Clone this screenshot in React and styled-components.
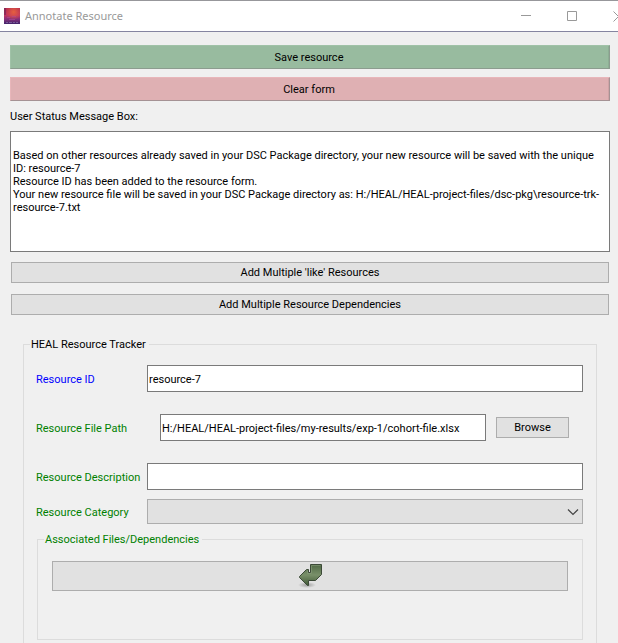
import React, { useState } from 'react';
import styled, { createGlobalStyle } from 'styled-components';

const GlobalStyle = createGlobalStyle`
  *, *::before, *::after { box-sizing: border-box; }
  body { margin: 0; background: #f0f0f0; }
  body, button, input, select, textarea {
    font-family: Roboto, Tahoma, sans-serif;
    font-size: 11px;
    line-height: 13px;
    color: #000;
  }
`;

const Window = styled.div`
  height: 100vh;
  overflow: hidden;
  background: #f0f0f0;
`;

const TitleBar = styled.header`
  display: flex;
  align-items: center;
  height: 32px;
  padding-left: 4px;
  overflow: hidden;
  background: #fff;
  border-top: 1px solid #97979b;
  border-bottom: 1px solid #8585a0;
`;

const Title = styled.h1`
  flex: 1;
  margin: 0 0 0 5px;
  font: 400 11px/16px "Noto Sans", "Segoe UI", sans-serif;
  color: #999;
`;

const WindowButton = styled.button`
  display: flex;
  flex: none;
  align-items: center;
  justify-content: center;
  width: 46px;
  height: 30px;
  padding: 0;
  background: none;
  border: 0;
`;

const ClippedCorner = styled.div`
  width: 23px;
  overflow: hidden;
`;

const Body = styled.main`
  display: flex;
  flex-direction: column;
  padding: 13px 8px 0 10px;
`;

const ActionButton = styled.button`
  height: 24px;
  margin-bottom: 8px;
  padding: 0 2px 0 0;
  background: ${p => p.$fill};
  border: 1px solid;
  border-color: ${p => p.$light} ${p => p.$dark} ${p => p.$dark} ${p => p.$light};
  box-shadow: inset -1px 0 ${p => p.$shade};
`;

const StatusLabel = styled.label`
  margin: 1px 0 8px;
`;

const StatusBox = styled.textarea`
  display: block;
  height: 121px;
  padding: 4px 2px;
  background: #fff;
  border: 1px solid #7a7a7a;
  border-radius: 0;
  outline: 0;
  resize: none;
  overflow: hidden;
`;

const PushButton = styled.button`
  display: flex;
  align-items: center;
  justify-content: center;
  height: ${p => (p.$tall ? '30px' : '21px')};
  padding: 0;
  background: #e1e1e1;
  border: 1px solid #adadad;
`;

const ButtonStack = styled.div`
  display: flex;
  flex-direction: column;
  gap: 11px;
  padding: 10px 1px 0;
`;

const Group = styled.fieldset`
  min-width: 0;
  margin: ${p => p.$margin};
  padding: ${p => p.$padding};
  border: 1px solid #dcdcdc;
`;

const Legend = styled.legend`
  margin-left: ${p => p.$indent};
  padding: 0 3px 0 1px;
  color: ${p => p.$color};
`;

const Fields = styled.div`
  display: grid;
  grid-template-columns: 103px minmax(0, 1fr);
  column-gap: 8px;
  align-items: center;
`;

const FieldLabel = styled.label`
  padding-top: 2px;
  color: ${p => p.$color || '#008000'};
  white-space: nowrap;
`;

const TextInput = styled.input`
  flex: 1;
  width: 100%;
  min-width: 0;
  height: 27px;
  padding: 2px 1px 0;
  background: #fff;
  border: 1px solid #7a7a7a;
  border-radius: 0;
  outline: 0;
`;

const PathRow = styled.div`
  display: flex;
  align-items: center;
  gap: 10px;
  padding: 22px 14px 22px 13px;
`;

const BrowseButton = styled(PushButton)`
  flex: none;
  width: 73px;
`;

const SelectWrap = styled.div`
  display: grid;
  margin-top: 9px;
  align-items: center;

  & > * { grid-area: 1 / 1; }
  & > svg { justify-self: end; margin-right: 4px; pointer-events: none; }
`;

const CategoryLabel = styled(FieldLabel)`
  margin-top: 9px;
`;

const Select = styled.select`
  width: 100%;
  height: 25px;
  padding: 0 20px 0 3px;
  appearance: none;
  background: #e1e1e1;
  border: 1px solid #adadad;
  border-radius: 0;
`;

const DependencyBody = styled.div`
  display: flex;
  flex-direction: column;
  min-height: 78px;
`;

const STATUS = `
Based on other resources already saved in your DSC Package directory, your new resource will be saved with the unique ID: resource-7
Resource ID has been added to the resource form.
Your new resource file will be saved in your DSC Package directory as: H:/HEAL/HEAL-project-files/dsc-pkg\\resource-trk-resource-7.txt`;

function AppIcon() {
  return (
    <svg width="16" height="16" viewBox="0 0 16 16" aria-hidden="true">
      <defs>
        <linearGradient id="sky" x1="0" y1="0" x2="0" y2="1">
          <stop offset="0" stopColor="#b52b4d" />
          <stop offset="0.45" stopColor="#c23560" />
          <stop offset="0.7" stopColor="#85307a" />
          <stop offset="1" stopColor="#40246a" />
        </linearGradient>
        <radialGradient id="glow" cx="0.6" cy="0.25" r="0.5">
          <stop offset="0" stopColor="#e5603f" />
          <stop offset="1" stopColor="#e5603f" stopOpacity="0" />
        </radialGradient>
      </defs>
      <rect width="16" height="16" fill="url(#sky)" />
      <rect width="16" height="16" fill="url(#glow)" />
      <path d="M0 0h2v7H0z" fill="#5d2457" opacity=".5" />
      <path d="M3 9h3v1H3zM8 8h4v1H8zM5 11h6v1H5z" fill="#b04a92" opacity=".6" />
      <path d="M2 14h2v1H2zM5 14h3v1H5zM9 14h2v1H9zM12 14h2v1h-2z" fill="#8f7bb0" opacity=".6" />
    </svg>
  );
}

function ReturnArrow() {
  return (
    <svg width="26" height="26" viewBox="0 0 26 26" aria-hidden="true">
      <defs>
        <linearGradient id="leaf" x1="0" y1="0" x2="0" y2="1">
          <stop offset="0" stopColor="#4f6844" />
          <stop offset="0.5" stopColor="#799069" />
          <stop offset="1" stopColor="#3f5735" />
        </linearGradient>
        <radialGradient id="shadow">
          <stop offset="0" stopColor="#000" stopOpacity="0.3" />
          <stop offset="1" stopColor="#000" stopOpacity="0" />
        </radialGradient>
      </defs>
      <ellipse cx="10" cy="22" rx="9" ry="3" fill="url(#shadow)" />
      <path
        d="M13.500 1.500H24.500V11.500L18.500 17.500H11.500V22.500H10.500L2.500 14.500V13.500L9.500 6.500H11.500V9.500H13.500Z"
        fill="url(#leaf)"
        stroke="#3c4a38"
        strokeLinejoin="round"
      />
      <path d="M14.500 10.500V2.500H23.500M10.500 10.500H14M10.500 7.500V10.500" fill="none" stroke="#8fa481" opacity=".5" />
    </svg>
  );
}

export default function App() {
  const [resourceId, setResourceId] = useState('resource-7');
  const [path, setPath] = useState('H:/HEAL/HEAL-project-files/my-results/exp-1/cohort-file.xlsx');
  const [description, setDescription] = useState('');

  return (
    <Window>
      <GlobalStyle />
      <TitleBar>
        <AppIcon />
        <Title>Annotate Resource</Title>
        <WindowButton type="button" aria-label="Minimize">
          <svg width="11" height="11"><path d="M0 4.500H10" stroke="#999" /></svg>
        </WindowButton>
        <WindowButton type="button" aria-label="Maximize">
          <svg width="11" height="11"><path d="M.5 .5H9.500V9.500H.5Z" fill="none" stroke="#999" /></svg>
        </WindowButton>
        <ClippedCorner>
          <WindowButton type="button" aria-label="Close">
            <svg width="11" height="11"><path d="M.5 .5L10.500 10.500M10.500 .5L.5 10.500" stroke="#999" /></svg>
          </WindowButton>
        </ClippedCorner>
      </TitleBar>

      <Body>
        <ActionButton type="button" $fill="#98bb9f" $light="#a0c2a7" $dark="#8c9c8f" $shade="#8dae94">Save resource</ActionButton>
        <ActionButton type="button" $fill="#dfb0b3" $light="#e8b6ba" $dark="#a59294" $shade="#cfa3a6">Clear form</ActionButton>

        <StatusLabel htmlFor="status">User Status Message Box:</StatusLabel>
        <StatusBox id="status" readOnly value={STATUS} />

        <ButtonStack>
          <PushButton type="button">Add Multiple 'like' Resources</PushButton>
          <PushButton type="button">Add Multiple Resource Dependencies</PushButton>
        </ButtonStack>

        <Group $margin="23px 13px 0" $padding="14px 13px 20px 12px">
          <Legend $indent="-6px">HEAL Resource Tracker</Legend>
          <Fields>
            <FieldLabel htmlFor="rid" $color="#0000ff">Resource ID</FieldLabel>
            <TextInput id="rid" value={resourceId} onChange={e => setResourceId(e.target.value)} />

            <FieldLabel htmlFor="path">Resource File Path</FieldLabel>
            <PathRow>
              <TextInput id="path" value={path} onChange={e => setPath(e.target.value)} />
              <BrowseButton type="button">Browse</BrowseButton>
            </PathRow>

            <FieldLabel htmlFor="desc">Resource Description</FieldLabel>
            <TextInput id="desc" value={description} onChange={e => setDescription(e.target.value)} />

            <CategoryLabel htmlFor="cat">Resource Category</CategoryLabel>
            <SelectWrap>
              <Select id="cat" defaultValue=""><option value="" /></Select>
              <svg width="12" height="8" viewBox="0 0 12 8" aria-hidden="true">
                <path d="M1 1.500L6 6.500L11 1.500" fill="none" stroke="#444" strokeWidth="1.200" />
              </svg>
            </SelectWrap>
          </Fields>

          <Group $margin="9px 0 0 1px" $padding="15px 14px 0">
            <Legend $indent="-8px" $color="#008000">Associated Files/Dependencies</Legend>
            <DependencyBody>
              <PushButton type="button" $tall aria-label="Add dependency"><ReturnArrow /></PushButton>
            </DependencyBody>
          </Group>
        </Group>
      </Body>
    </Window>
  );
}
